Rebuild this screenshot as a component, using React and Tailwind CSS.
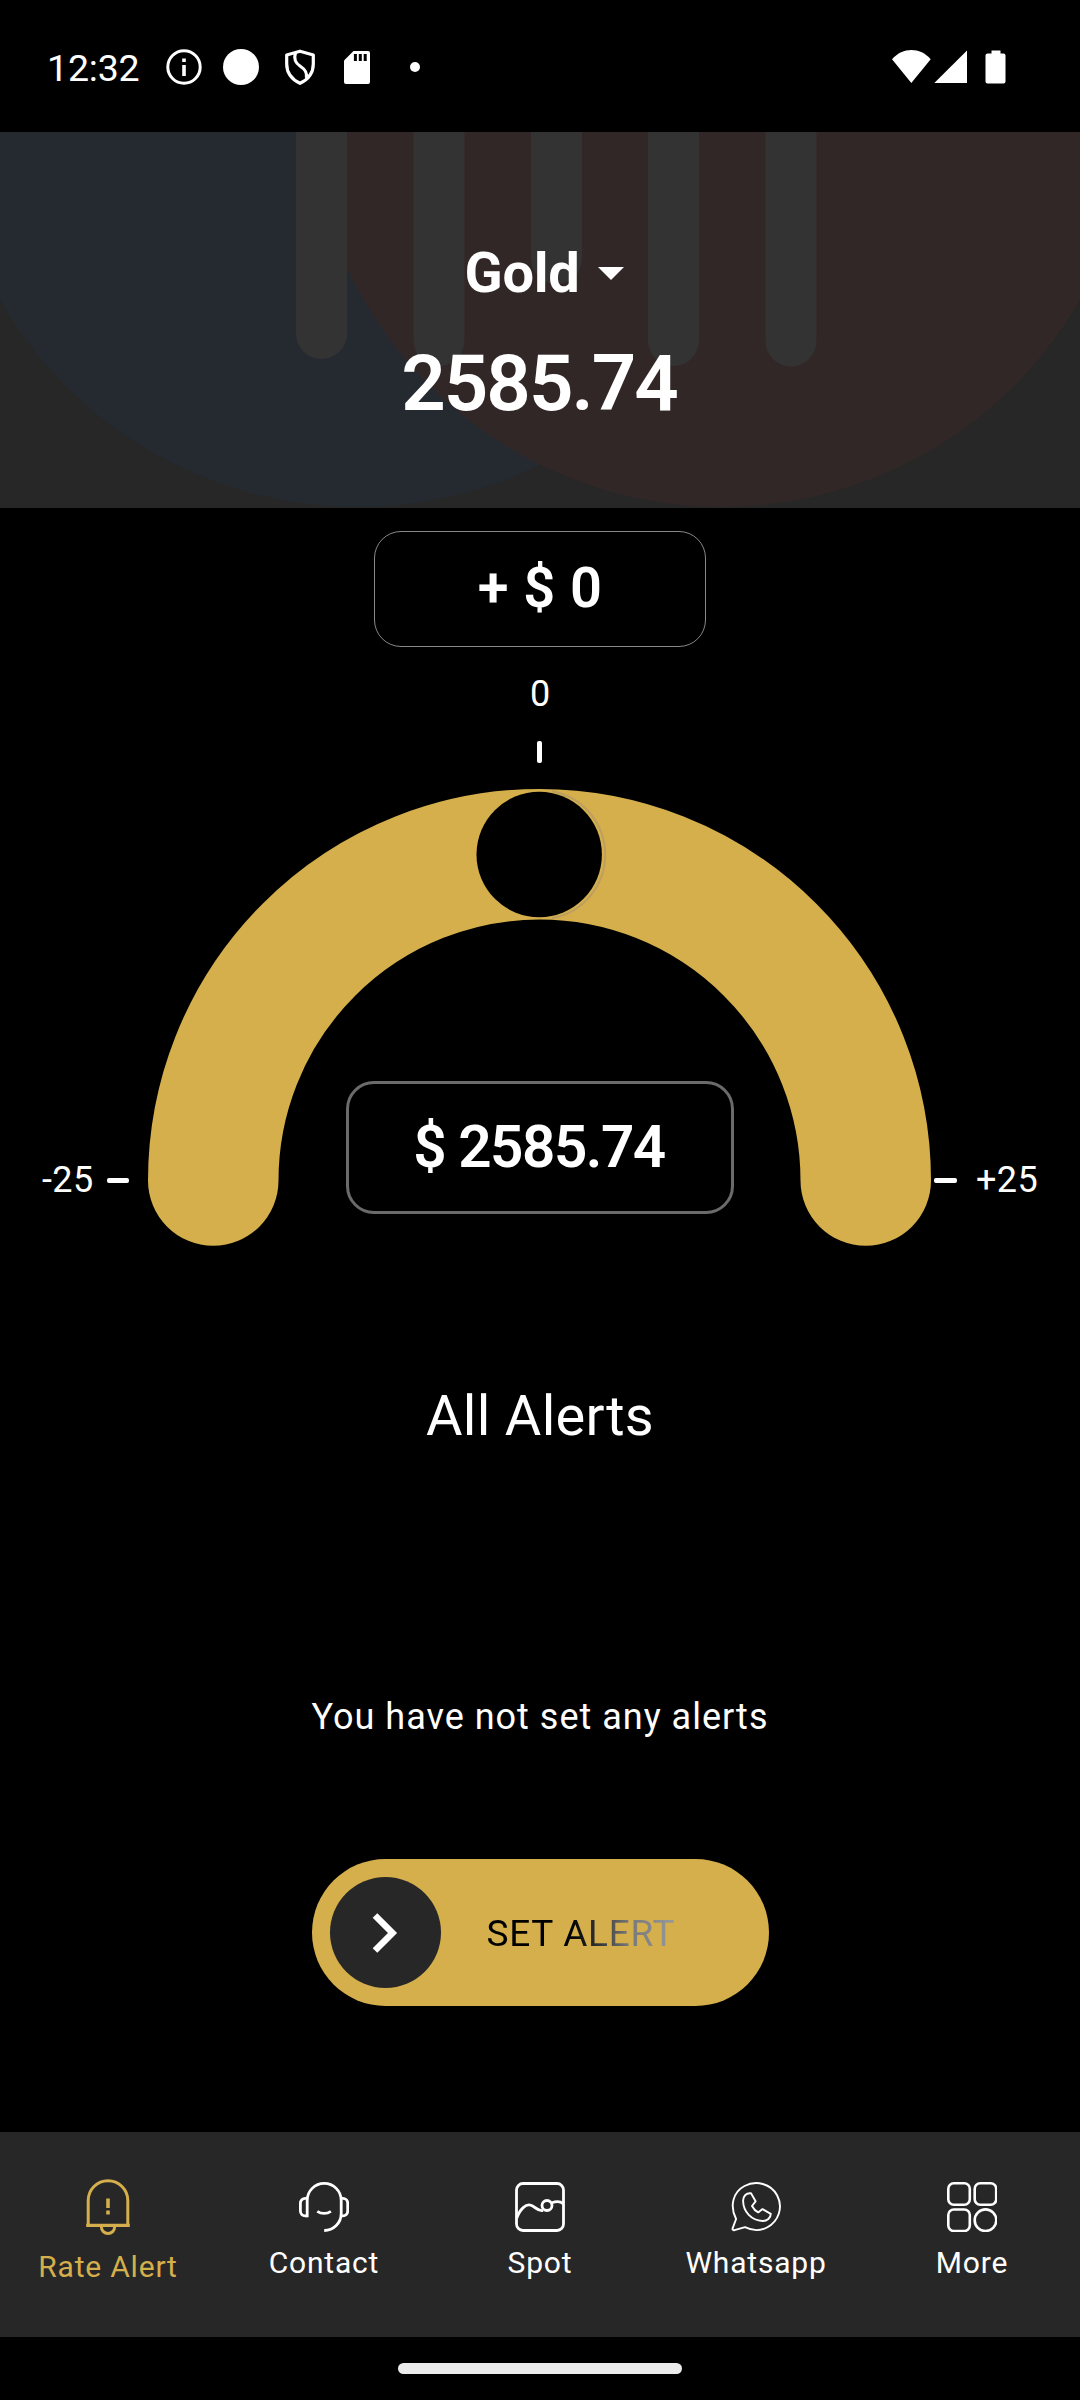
const NAV_ITEMS = [
  { label: "Rate Alert", icon: BellIcon, active: true },
  { label: "Contact", icon: HeadsetIcon },
  { label: "Spot", icon: SpotIcon },
  { label: "Whatsapp", icon: WhatsappIcon },
  { label: "More", icon: MoreIcon },
];

// x position and bottom edge of each rounded bar behind the header text.
const HEADER_BARS = [
  { x: 296, bottom: 227 },
  { x: 413.5, bottom: 234 },
  { x: 531, bottom: 152 },
  { x: 648, bottom: 234 },
  { x: 765.5, bottom: 234.5 },
];

function BellIcon() {
  return (
    <svg width="46" height="58" viewBox="0 0 46 58" fill="none" stroke="currentColor" strokeWidth="3">
      <path d="M3.2 46.3V21.5a19.8 19.8 0 0 1 39.6 0V46.3" />
      <path d="M1.2 46.4H44.8" strokeWidth="3.2" />
      <path d="M16.4 48a6.6 6.6 0 0 0 13.2 0" />
      <path d="M23 19.5V29M23 31.6V35.6" strokeWidth="3.6" />
    </svg>
  );
}

function HeadsetIcon() {
  return (
    <svg width="50" height="50" viewBox="0 0 50 50" fill="none" stroke="currentColor" strokeWidth="2.8">
      <path d="M8.2 35.2V18.4a17 17 0 0 1 34 0V31.5a17 17 0 0 1-17 17" />
      <path d="M8.2 16.4H6.2a4.8 4.8 0 0 0-4.8 4.8V29a4.8 4.8 0 0 0 4.8 4.8h2" />
      <path d="M42.2 16.4h1.7a4.8 4.8 0 0 1 4.8 4.8V29a4.8 4.8 0 0 1-4.8 4.8h-1.7" />
      <path d="M18.3 29.3c4 2.8 9.6 2.8 13.6 0" />
    </svg>
  );
}

function SpotIcon() {
  return (
    <svg width="50" height="50" viewBox="0 0 50 50" fill="none" stroke="currentColor" strokeWidth="2.8">
      <rect x="1.5" y="1.5" width="47" height="47" rx="6.5" />
      <circle cx="32" cy="23.5" r="5" />
      <path d="M1.8 36C5 27 11 21.5 16 23.3c4.5 1.6 7.5 6.5 12 5.2M37 20.8c4-1.6 8-1.8 11.5 1" />
    </svg>
  );
}

function WhatsappIcon() {
  return (
    <svg width="50" height="50" viewBox="0 0 50 50" fill="none" stroke="currentColor" strokeWidth="1.9" strokeLinejoin="round">
      <path d="M5.1 37C-1.6 24 2 10 13.5 4 25-2 40 1.5 46.2 13.5 52.5 25.5 47.5 39.5 36 45.5c-7.5 3.8-15 3.2-22-.3L3.5 48.2c-1.3.3-2.3-.5-1.9-1.9z" />
      <path d="M20 11.3c-4.5-.7-8 2.7-7.9 7.8C12.3 30 20.5 38.5 31.5 39c4.6.2 8.3-3.2 8.3-7.2l-8.3-4.7-4.3 3.3c-2.5-1.3-4.7-3.5-6.2-6.4l3.6-4.7z" />
    </svg>
  );
}

function MoreIcon() {
  return (
    <svg width="50" height="50" viewBox="0 0 50 50" fill="none" stroke="currentColor" strokeWidth="2.6">
      <rect x="1.3" y="1.3" width="21.5" height="21.5" rx="5.5" />
      <rect x="27.7" y="1.3" width="21.5" height="21.5" rx="5.5" />
      <rect x="1.3" y="27.5" width="21.5" height="21.5" rx="5.5" />
      <circle cx="38.5" cy="38.2" r="10.8" />
    </svg>
  );
}

function StatusBar() {
  return (
    <div className="flex h-[132px] shrink-0 items-center justify-between pt-[2px] pr-[74px] pl-[47px]">
      <div className="flex items-center">
        <span className="w-[119px] pt-[2px] text-[37.5px] leading-[44px] tracking-[-0.2px]">12:32</span>
        <svg width="36" height="36" viewBox="0 0 36 36" fill="none" stroke="white" strokeWidth="3">
          <circle cx="18" cy="18" r="16.2" />
          <path d="M18 9.5v3.5M18 16v11" strokeWidth="3.6" />
        </svg>
        <span className="ml-[21px] size-[36px] rounded-full bg-white" />
        <svg className="ml-[26px]" width="30" height="36" viewBox="0 0 30 36" fill="none" stroke="white" strokeWidth="3.2" strokeLinejoin="round">
          <path d="M15 2.2L1.7 6v9c0 9 5.3 15.5 13.3 19.3C23 30.5 28.3 24 28.3 15V6z" />
          <path d="M10.5 3.5c-2 7 0 10.5 4.5 13.5s7.5 6 6.5 12" />
        </svg>
        <svg className="ml-[29px]" width="26" height="33" viewBox="0 0 26 33">
          <path d="M9.5 0H24a2 2 0 0 1 2 2v29a2 2 0 0 1-2 2H2a2 2 0 0 1-2-2V9.5z" fill="white" />
          <path d="M11.4 3v7M16.3 3v7M21.2 3v7" stroke="black" strokeWidth="3" />
        </svg>
        <span className="ml-[40px] size-[10px] rounded-full bg-white" />
      </div>
      <svg width="114" height="34" viewBox="0 0 114 34" fill="white">
        <path d="M19.3 33L0 9.3C11-3 28-3 38.7 9.3z" />
        <path d="M75 .5V33H42.3z" />
        <path d="M99.5.5h9V3.5h3a2 2 0 0 1 2 2v26a2 2 0 0 1-2 2h-16a2 2 0 0 1-2-2v-26a2 2 0 0 1 2-2h4z" />
      </svg>
    </div>
  );
}

function Header() {
  return (
    <header className="relative flex h-[376px] shrink-0 flex-col items-center bg-[#272727] pt-[108px]">
      <svg className="absolute inset-0" width="1080" height="376" viewBox="0 0 1080 376">
        <circle cx="358" cy="-38" r="413" fill="#252a31" />
        <circle cx="722" cy="-38" r="413" fill="#322727" />
        {HEADER_BARS.map((bar) => (
          <rect key={bar.x} x={bar.x} y="-60" width="51" height={bar.bottom + 60} rx="25.5" fill="#333333" />
        ))}
      </svg>
      <button className="relative flex items-center gap-[19px] pl-[9px] text-[56px] leading-[66px] font-bold tracking-[-0.3px]">
        Gold
        <svg width="26" height="13" viewBox="0 0 26 13" fill="white">
          <path d="M0 0h26L13 13z" />
        </svg>
      </button>
      <p className="relative mt-[32px] pr-[2px] text-[78px] leading-[92px] font-semibold tracking-[-2px]">2585.74</p>
    </header>
  );
}

// Half-circle slider from -25 to +25 with the thumb resting at 0.
function Gauge() {
  return (
    <div className="relative mt-[26px] flex h-[457px] w-full shrink-0 items-start text-[36px] leading-[42px] tracking-[0.4px]">
      <span className="mt-[370px] w-[107px] pl-[42px]">-25</span>
      <span className="mt-[389px] mr-[19px] h-[5px] w-[22px] rounded-[2px] bg-white" />
      <svg width="783" height="458" viewBox="0 0 783 458" fill="none">
        <path
          d="M65.25 391.5a326.25 326.25 0 0 1 652.5 0"
          stroke="#d4af4c"
          strokeWidth="130.5"
          strokeLinecap="round"
        />
        <path d="M404 2.2a64.5 64.5 0 0 1 0 127" stroke="#bd9f60" strokeWidth="2" />
        <circle cx="391.2" cy="65.5" r="62.7" fill="black" />
      </svg>
      <span className="mt-[389px] ml-[3px] h-[5px] w-[23px] rounded-[2px] bg-white" />
      <span className="mt-[370px] ml-[19px]">+25</span>
      <div className="absolute top-[292px] left-[346px] flex h-[133px] w-[388px] items-center justify-center rounded-[28px] border-3 border-[#6b6b6b] pr-[2px] pb-[2px] text-[58.5px] font-semibold tracking-[-1.5px]">
        $ 2585.74
      </div>
    </div>
  );
}

function SetAlertSlider() {
  return (
    <div className="mt-[121px] flex h-[147px] w-[457px] shrink-0 items-center rounded-full bg-[#d4af4c] pl-[18px]">
      <div className="flex size-[111px] items-center justify-center rounded-full bg-[#272727]">
        <svg width="26" height="40" viewBox="0 0 26 40" fill="none" stroke="white" strokeWidth="6.5">
          <path d="M3 2.5L20.5 20 3 37.5" />
        </svg>
      </div>
      <span className="mt-[2px] ml-[46px] bg-linear-to-r from-black from-38% via-[#777777] via-75% to-[#999999] bg-clip-text text-[37px] leading-[44px] tracking-[0.7px] text-transparent">
        SET ALERT
      </span>
    </div>
  );
}

function BottomNav() {
  return (
    <nav className="grid h-[205px] shrink-0 grid-cols-5 bg-[#272727] text-[30px] leading-[36px] tracking-[0.8px]">
      {NAV_ITEMS.map(({ label, icon: Icon, active }) => (
        <div
          key={label}
          className={`flex flex-col items-center ${
            active ? "pt-[47px] text-[#d4af4c]" : "pt-[50px] text-white"
          }`}
        >
          <Icon />
          <span className={active ? "mt-[12px]" : "mt-[13px]"}>{label}</span>
        </div>
      ))}
    </nav>
  );
}

export default function App() {
  return (
    <div className="flex h-[2400px] w-[1080px] flex-col overflow-hidden bg-black font-[Roboto,sans-serif] text-white">
      <StatusBar />
      <Header />
      <main className="flex flex-1 flex-col items-center pt-[23px]">
        <div className="flex h-[116px] w-[332px] shrink-0 items-center justify-center rounded-[27px] border border-[#888888] pb-[2px] text-[56px] font-semibold tracking-[0.4px]">
          + $ 0
        </div>
        <span className="mt-[26px] text-[36px] leading-[42px]">0</span>
        <span className="mt-[26px] mr-[2px] h-[22px] w-[5px] rounded-[2px] bg-white" />
        <Gauge />
        <h2 className="mt-[137px] text-[56px] leading-[66px] tracking-[0.3px]">All Alerts</h2>
        <p className="mt-[247px] text-[36px] leading-[42px] tracking-[1px]">You have not set any alerts</p>
        <SetAlertSlider />
      </main>
      <BottomNav />
      <div className="flex h-[63px] shrink-0 justify-center pt-[26px]">
        <span className="h-[11px] w-[284px] rounded-full bg-[#ebebeb]" />
      </div>
    </div>
  );
}
